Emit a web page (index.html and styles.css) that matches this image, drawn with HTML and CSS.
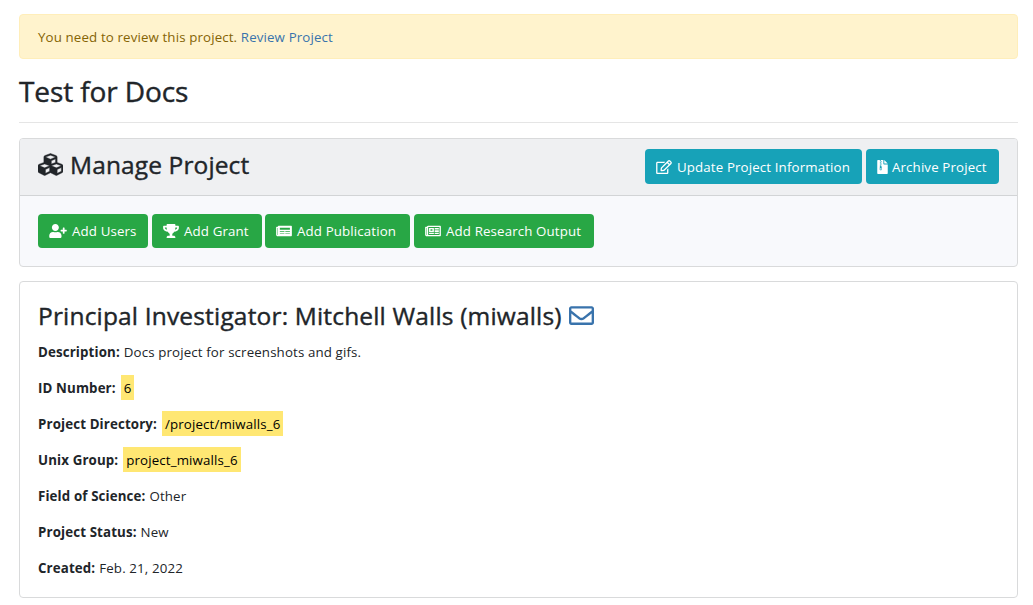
FILE: index.html
```html
<!DOCTYPE html>
<html lang="en">
<head>
<meta charset="utf-8">
<title>Test for Docs</title>
<link rel="stylesheet" href="styles.css">
</head>
<body>
<main class="container">
  <div class="alert">You need to review this project. <a href="#">Review Project</a></div>
  <h1 class="title">Test for Docs</h1>
  <hr class="rule">
  <section class="card manage">
    <header class="card-header">
      <h2 class="heading"><svg class="cubes" viewBox="0 0 512 512" preserveAspectRatio="none"><path d="M488.6 250.2L392 214V105.5c0-15-9.3-28.4-23.4-33.7l-100-37.5c-8.1-3.1-17.1-3.1-25.3 0l-100 37.5c-14.1 5.3-23.4 18.7-23.4 33.7V214l-96.6 36.2C9.3 255.5 0 268.9 0 283.9V394c0 13.6 7.7 26.1 19.9 32.2l100 50c10.1 5.1 22.1 5.1 32.2 0l103.9-52 103.9 52c10.1 5.1 22.1 5.1 32.2 0l100-50c12.2-6.1 19.9-18.6 19.9-32.2V283.9c0-15-9.3-28.4-23.4-33.7zM358 214.8l-85 31.9v-68.2l85-37v73.3zM154 104.1l102-38.2 102 38.2v.6l-102 41.4-102-41.4v-.6zm84 291.1l-85 42.5v-79.1l85-38.8v75.4zm0-112l-102 41.4-102-41.4v-.6l102-38.2 102 38.2v.6zm240 112l-85 42.5v-79.1l85-38.8v75.4zm0-112l-102 41.4-102-41.4v-.6l102-38.2 102 38.2v.6z"/></svg><span>Manage Project</span></h2>
      <div class="actions">
        <a class="btn info update"><svg class="icon w576" viewBox="0 0 576 512"><path d="M402.3 344.9l32-32c5-5 13.7-1.5 13.7 5.7V464c0 26.5-21.5 48-48 48H48c-26.5 0-48-21.5-48-48V112c0-26.5 21.5-48 48-48h273.5c7.1 0 10.7 8.6 5.7 13.7l-32 32c-1.5 1.5-3.5 2.3-5.7 2.3H48v352h352V350.5c0-2.1.8-4.1 2.3-5.6zm156.6-201.8L296.3 405.7l-90.4 10c-26.2 2.9-48.5-19.2-45.6-45.6l10-90.4L432.9 17.1c22.9-22.9 59.9-22.9 82.7 0l43.2 43.2c22.9 22.9 22.9 60 .1 82.8zM460.1 174L402 115.9 216.2 301.8l-7.3 65.3 65.3-7.3L460.1 174zm64.8-79.7l-43.2-43.2c-4.1-4.1-10.8-4.1-14.8 0L436 82l58.1 58.1 30.9-30.9c4-4.2 4-10.8-.1-14.9z"/></svg><span>Update Project Information</span></a>
        <a class="btn info archive"><svg class="icon w384" viewBox="0 0 384 512"><path fill-rule="evenodd" d="M24 0H96V32H128V0H224V136C224 149 235 160 248 160H384V488C384 501 373 512 360 512H24C11 512 0 501 0 488V24C0 11 11 0 24 0ZM256 0L384 128H256ZM128 32V64H160V32ZM96 64V96H128V64ZM128 96V128H160V96ZM96 128V160H128V128ZM128 160V192H160V160ZM96 192V224L90 330C84 362 103 376 128 376S172 362 166 330L160 224H128V192ZM128 304C146 304 154 314 154 328S146 346 128 346 102 342 102 328 110 304 128 304Z"/></svg><span>Archive Project</span></a>
      </div>
    </header>
    <div class="tools">
      <a class="btn success users"><svg class="icon w640" viewBox="0 0 640 512"><path d="M624 208h-64v-64c0-8.8-7.2-16-16-16h-32c-8.8 0-16 7.2-16 16v64h-64c-8.8 0-16 7.2-16 16v32c0 8.8 7.2 16 16 16h64v64c0 8.8 7.2 16 16 16h32c8.8 0 16-7.2 16-16v-64h64c8.8 0 16-7.2 16-16v-32c0-8.8-7.2-16-16-16zm-400 48c70.7 0 128-57.3 128-128S294.7 0 224 0 96 57.3 96 128s57.3 128 128 128zm89.6 32h-16.7c-22.2 10.2-46.9 16-72.9 16s-50.6-5.8-72.9-16h-16.7C60.2 288 0 348.2 0 422.4V464c0 26.5 21.5 48 48 48h352c26.5 0 48-21.5 48-48v-41.6c0-74.2-60.2-134.4-134.4-134.4z"/></svg><span>Add Users</span></a>
      <a class="btn success grant"><svg class="icon w576" viewBox="0 0 576 512"><path d="M552 64H448V24c0-13.3-10.7-24-24-24H152c-13.3 0-24 10.7-24 24v40H24C10.7 64 0 74.7 0 88v56c0 35.7 22.5 72.4 61.9 100.7 31.5 22.7 69.8 37.1 110 41.7C203.3 338.5 240 360 240 360v72h-48c-35.3 0-64 20.7-64 56v12c0 6.6 5.4 12 12 12h296c6.6 0 12-5.4 12-12v-12c0-35.3-28.7-56-64-56h-48v-72s36.7-21.5 68.1-73.6c40.3-4.6 78.6-19 110-41.7 39.3-28.3 61.9-65 61.9-100.7V88c0-13.3-10.7-24-24-24zM99.3 192.8C74.9 175.2 64 155.6 64 144v-16h64.2c1 32.6 5.8 61.2 12.8 86.2-15.1-5.2-29.2-12.4-41.7-21.4zM512 144c0 16.1-17.7 36.1-35.3 48.8-12.5 9-26.7 16.2-41.8 21.4 7-25 11.8-53.6 12.8-86.2H512v16z"/></svg><span>Add Grant</span></a>
      <a class="btn success publication"><svg class="icon w576" viewBox="0 0 576 512"><path fill-rule="evenodd" d="M88 64H552C565 64 576 75 576 88V424C576 437 565 448 552 448H56C25 448 0 423 0 392V120C0 107 11 96 24 96H64V88C64 75 75 64 88 64ZM48 144V392C48 397 51 400 56 400S64 397 64 392V144ZM136 136V208H504V136ZM136 264V288H304V264ZM336 264V288H504V264ZM136 344V368H304V344ZM336 344V368H504V344Z"/></svg><span>Add Publication</span></a>
      <a class="btn success research"><svg class="icon w576" viewBox="0 0 576 512"><path fill-rule="evenodd" d="M112 64H552C565 64 576 75 576 88V424C576 437 565 448 552 448H56C25 448 0 423 0 392V120C0 107 11 96 24 96H65C71 76 89 64 112 64ZM48 144V392C48 397 51 400 56 400S64 397 64 392V144ZM112 112V400H528V112ZM156 144H308C315 144 320 149 320 156V280C320 287 315 292 308 292H156C149 292 144 287 144 280V156C144 149 149 144 156 144ZM196 192V244H268V192ZM348 144H500V200H348ZM348 232H500V288H348ZM144 320H320V368H144ZM348 320H500V368H348Z"/></svg><span>Add Research Output</span></a>
    </div>
  </section>
  <section class="card details">
    <h2 class="heading investigator"><span>Principal Investigator: Mitchell Walls (miwalls)</span><svg class="mail" viewBox="0 0 512 512"><path d="M464 64H48C21.49 64 0 85.49 0 112v288c0 26.51 21.49 48 48 48h416c26.51 0 48-21.49 48-48V112c0-26.51-21.49-48-48-48zm0 48v40.805c-22.422 18.259-58.168 46.651-134.587 106.49-16.841 13.247-50.201 45.072-73.413 44.701-23.208.375-56.579-31.459-73.413-44.701C106.18 199.465 70.425 171.067 48 152.805V112h416zM48 400V214.398c22.914 18.251 55.409 43.862 104.938 82.646 21.857 17.205 60.134 55.186 103.062 54.955 42.717.231 80.509-37.199 103.053-54.947 49.528-38.783 82.032-64.401 104.947-82.653V400H48z"/></svg></h2>
    <dl class="facts">
      <div class="fact"><dt>Description:</dt><dd>Docs project for screenshots and gifs.</dd></div>
      <div class="fact"><dt>ID Number:</dt><dd class="mark">6</dd></div>
      <div class="fact"><dt>Project Directory:</dt><dd class="mark">/project/miwalls_6</dd></div>
      <div class="fact"><dt>Unix Group:</dt><dd class="mark">project_miwalls_6</dd></div>
      <div class="fact"><dt>Field of Science:</dt><dd>Other</dd></div>
      <div class="fact"><dt>Project Status:</dt><dd>New</dd></div>
      <div class="fact"><dt>Created:</dt><dd>Feb. 21, 2022</dd></div>
    </dl>
  </section>
</main>
</body>
</html>
```
FILE: styles.css
```css
* { box-sizing: border-box; }
body { margin: 0; background: #fff; color: #212529; font: 13.3px/21px "Open Sans", "Noto Sans", sans-serif; letter-spacing: .13px; white-space: nowrap; }
.container { padding: 14px 15px 0 19px; }
.alert { height: 45px; padding: 12px 18px; background: #fff3cd; border: 1px solid #ffeeba; border-radius: 4px; color: #856404; }
a { color: #3973ac; text-decoration: none; }
.title, .heading { -webkit-text-stroke: .4px currentColor; }
.title { margin: 14px 0 0; height: 37px; font-size: 28px; line-height: 37px; font-weight: 500; letter-spacing: -.1px; }
.rule { margin: 12px 0 15px; border: 0; border-top: 1px solid #e5e5e5; }
.card { border: 1px solid #d9dadb; border-radius: 4px; }
.manage { height: 129px; background: #f8f9fc; }
.card-header { display: flex; justify-content: space-between; height: 57px; padding: 10px 18px; background: #eff0f2; border-bottom: 1px solid #d2d4d6; border-radius: 3px 3px 0 0; }
.heading { display: flex; margin: 0; font-size: 24.5px; line-height: 32px; font-weight: 500; letter-spacing: .12px; }
.investigator { letter-spacing: .17px; }
.cubes { width: 25px; height: 25px; margin: 3px 7px 0 0; fill: #212529; stroke: #212529; stroke-width: 8px; flex: none; }
.mail { width: 25px; height: 25px; margin: 3px 0 0 7px; fill: #3973ac; flex: none; }
.actions, .tools { display: flex; gap: 4px; }
.tools { padding: 18px; }
.btn { display: flex; align-items: center; height: 34px; padding-left: 11px; border-radius: 4px; color: #fff; gap: 5px; }
.info { height: 35px; background: #17a2b8; }
.info span { padding-top: 1px; }
.success { background: #28a745; }
.icon { height: 14px; fill: #fff; flex: none; }
.w640 { width: 18px; }
.w576 { width: 16px; }
.w384 { width: 11px; }
.update { width: 217px; }
.archive { width: 133px; gap: 4px; }
.users { width: 110px; }
.grant { width: 110px; }
.publication { width: 145px; margin-left: -1px; }
.research { width: 180px; }
.details { margin-top: 14px; height: 317px; padding: 18px; }
.facts { display: grid; grid-auto-rows: 36px; margin: 2px 0 0; }
.fact { display: flex; align-items: center; gap: 4px; }
dt { font-weight: 700; }
dd { margin: 0; }
.mark { height: 25px; margin: 0 0 1px 1px; padding: 3px 3px 0; background: #ffe773; color: #000; }
```
